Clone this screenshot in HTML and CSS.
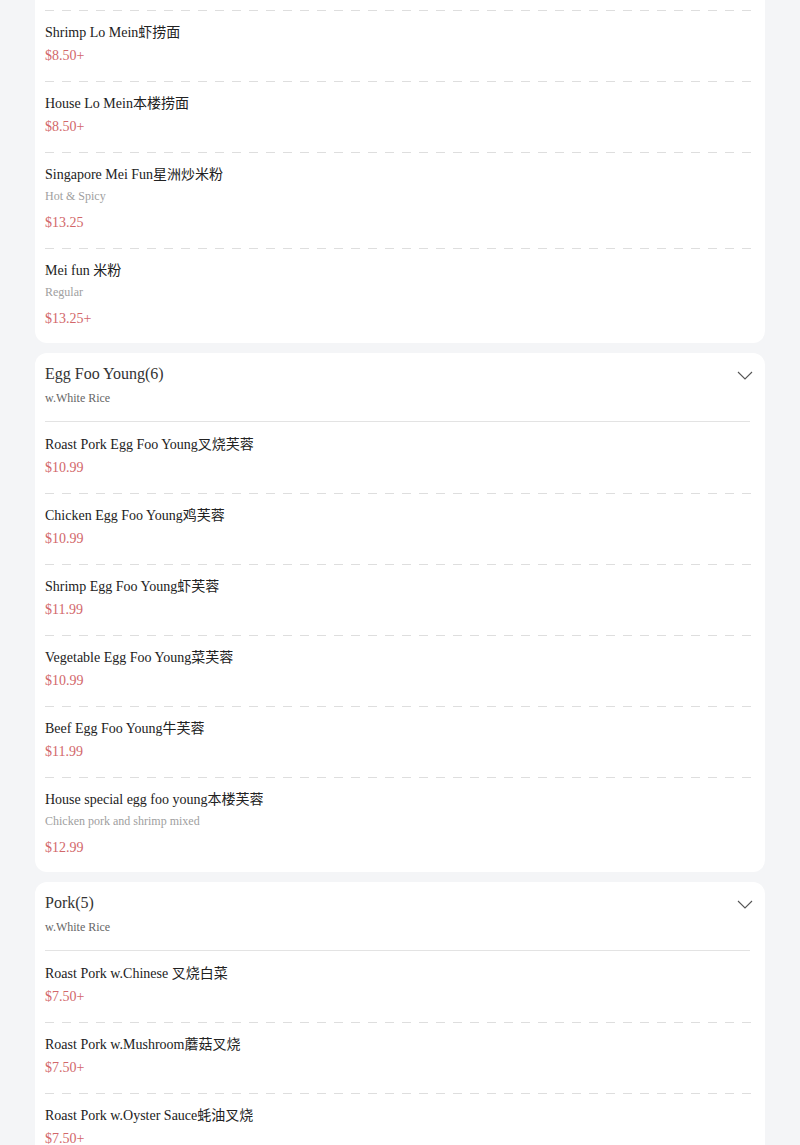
FILE: index.html
```html
<!DOCTYPE html>
<html lang="en">
<head>
<meta charset="utf-8">
<title>Menu</title>
<link rel="stylesheet" href="styles.css">
</head>
<body>
<main class="menu">
  <section class="card card--cut">
    <div class="item">
      <div class="item-name">Shrimp Lo Mein虾捞面</div>
      <div class="item-price">$8.50+</div>
    </div>
    <div class="item">
      <div class="item-name">House Lo Mein本楼捞面</div>
      <div class="item-price">$8.50+</div>
    </div>
    <div class="item">
      <div class="item-name">Singapore Mei Fun星洲炒米粉</div>
      <div class="item-desc">Hot &amp; Spicy</div>
      <div class="item-price">$13.25</div>
    </div>
    <div class="item">
      <div class="item-name">Mei fun 米粉</div>
      <div class="item-desc">Regular</div>
      <div class="item-price">$13.25+</div>
    </div>
  </section>

  <section class="card">
    <header class="cat-head">
      <div class="cat-row">
        <h2 class="cat-title">Egg Foo Young(6)</h2>
        <svg class="chev" width="16" height="9" viewBox="0 0 16 9"><polyline points="1,1 8,8 15,1" fill="none" stroke="#555" stroke-width="1.1"/></svg>
      </div>
      <div class="cat-sub">w.White Rice</div>
    </header>
    <div class="item">
      <div class="item-name">Roast Pork Egg Foo Young叉烧芙蓉</div>
      <div class="item-price">$10.99</div>
    </div>
    <div class="item">
      <div class="item-name">Chicken Egg Foo Young鸡芙蓉</div>
      <div class="item-price">$10.99</div>
    </div>
    <div class="item">
      <div class="item-name">Shrimp Egg Foo Young虾芙蓉</div>
      <div class="item-price">$11.99</div>
    </div>
    <div class="item">
      <div class="item-name">Vegetable Egg Foo Young菜芙蓉</div>
      <div class="item-price">$10.99</div>
    </div>
    <div class="item">
      <div class="item-name">Beef Egg Foo Young牛芙蓉</div>
      <div class="item-price">$11.99</div>
    </div>
    <div class="item">
      <div class="item-name">House special egg foo young本楼芙蓉</div>
      <div class="item-desc">Chicken pork and shrimp mixed</div>
      <div class="item-price">$12.99</div>
    </div>
  </section>

  <section class="card">
    <header class="cat-head">
      <div class="cat-row">
        <h2 class="cat-title">Pork(5)</h2>
        <svg class="chev" width="16" height="9" viewBox="0 0 16 9"><polyline points="1,1 8,8 15,1" fill="none" stroke="#555" stroke-width="1.1"/></svg>
      </div>
      <div class="cat-sub">w.White Rice</div>
    </header>
    <div class="item">
      <div class="item-name">Roast Pork w.Chinese 叉烧白菜</div>
      <div class="item-price">$7.50+</div>
    </div>
    <div class="item">
      <div class="item-name">Roast Pork w.Mushroom蘑菇叉烧</div>
      <div class="item-price">$7.50+</div>
    </div>
    <div class="item">
      <div class="item-name">Roast Pork w.Oyster Sauce蚝油叉烧</div>
      <div class="item-price">$7.50+</div>
    </div>
  </section>
</main>
</body>
</html>
```

FILE: styles.css
```css
* { box-sizing: border-box; }

html, body {
  margin: 0;
  padding: 0;
  background: #f4f5f7;
}

body {
  font-family: "Liberation Serif", "Noto Sans CJK SC", serif;
  color: #222;
}

.menu {
  padding: 0 35px;
  display: flex;
  flex-direction: column;
  gap: 10px;
}

.card {
  background: #fff;
  border-radius: 12px;
  padding: 0 10px;
}

.card--cut {
  border-radius: 0 0 12px 12px;
  padding-top: 10px;
}

.cat-head {
  padding: 10px 0 15px;
  margin-right: 5px;
  border-bottom: 1px solid #e3e3e3;
}

.cat-row {
  display: flex;
  align-items: center;
  justify-content: space-between;
  height: 22px;
}

.cat-title {
  margin: 0;
  font-size: 16px;
  line-height: 22px;
  font-weight: normal;
  color: #333;
}

.chev {
  display: block;
  margin-right: -3px;
  margin-top: 2px;
}

.cat-sub {
  margin-top: 5px;
  font-size: 12px;
  line-height: 16px;
  color: #666;
}

.item {
  padding: 14px 0 16px;
  background-image: linear-gradient(to right, #dedede 0 9px, transparent 9px 17px);
  background-size: 17px 1px;
  background-repeat: repeat-x;
  background-position: 0 0;
}

.cat-head + .item {
  background-image: none;
}

.card > .item:last-child {
  padding-bottom: 15px;
}

.item-name {
  font-size: 14px;
  line-height: 18px;
  color: #222;
}

.item-desc {
  margin-top: 4px;
  margin-bottom: 10px;
  font-size: 12px;
  line-height: 16px;
  color: #a0a0a0;
}

.item-name + .item-price {
  margin-top: 5px;
}

.item-price {
  font-size: 14px;
  line-height: 18px;
  color: #d2676a;
}
```
